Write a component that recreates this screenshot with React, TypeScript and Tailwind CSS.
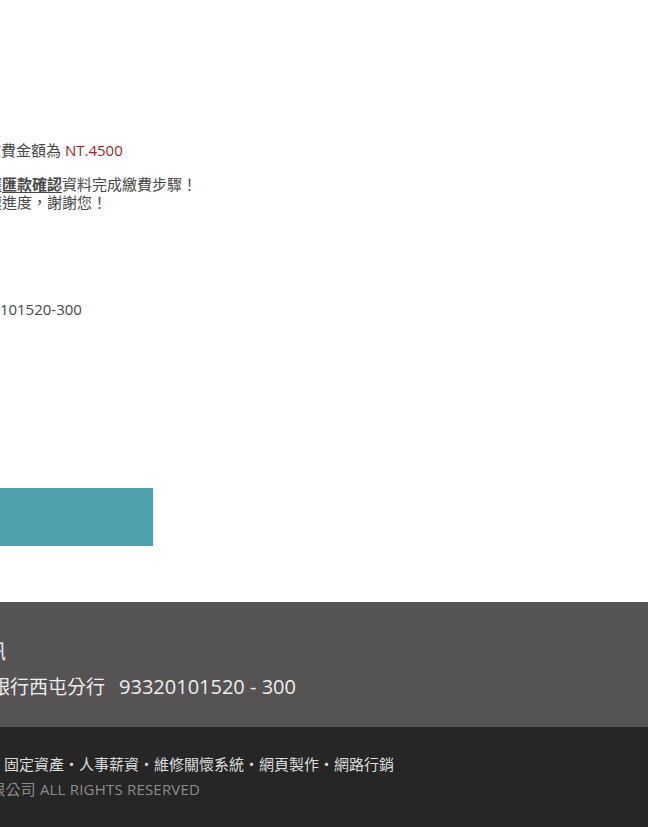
const font = { fontFamily: '"Open Sans", "Noto Sans CJK TC", sans-serif' };

const App = () => {
  return (
    <div className="w-[648px] overflow-hidden bg-white" style={font}>
      <main className="h-[602px] pt-[140px] text-[15px] text-[#484848]">
        <p className="-ml-[29px] whitespace-nowrap leading-[20px]">
          應繳費金額為 <span className="text-[#a31f24]">NT.4500</span>
        </p>
        <p className="-ml-[43px] mt-[16px] whitespace-nowrap leading-[17.5px]">
          請點選
          <a className="font-semibold underline underline-offset-2">匯款確認</a>
          資料完成繳費步驟！
          <br />
          以加速進度，謝謝您！
        </p>
        <p className="-ml-[43px] mt-[88px] whitespace-nowrap leading-[20px]">93320101520-300</p>
        <button className="mt-[169px] block h-[58px] w-[153px] bg-[#4ea1ad]" />
      </main>

      <footer className="h-[125px] bg-[#555354] pt-[36px] text-[#eee]">
        <h3 className="-ml-[34px] whitespace-nowrap text-[20px] leading-[28px]">資訊</h3>
        <p className="-ml-[104px] mt-[8px] flex items-baseline whitespace-nowrap leading-[26px]">
          <span className="text-[19px]">匯款帳號：銀行西屯分行</span>
          <span className="ml-[14px] text-[20px]">93320101520 - 300</span>
        </p>
      </footer>

      <footer className="h-[100px] bg-[#262626] pt-[27px] text-[15px]">
        <p className="-ml-[71px] whitespace-nowrap leading-[20px] text-[#ddd]">
          會計系統・固定資產・人事薪資・維修關懷系統・網頁製作・網路行銷
        </p>
        <p className="-ml-[25px] mt-[5px] whitespace-nowrap leading-[20px] tracking-[0.2px] text-[#8c8c8c]">
          有限公司 ALL RIGHTS RESERVED
        </p>
      </footer>
    </div>
  );
};

export default App;
